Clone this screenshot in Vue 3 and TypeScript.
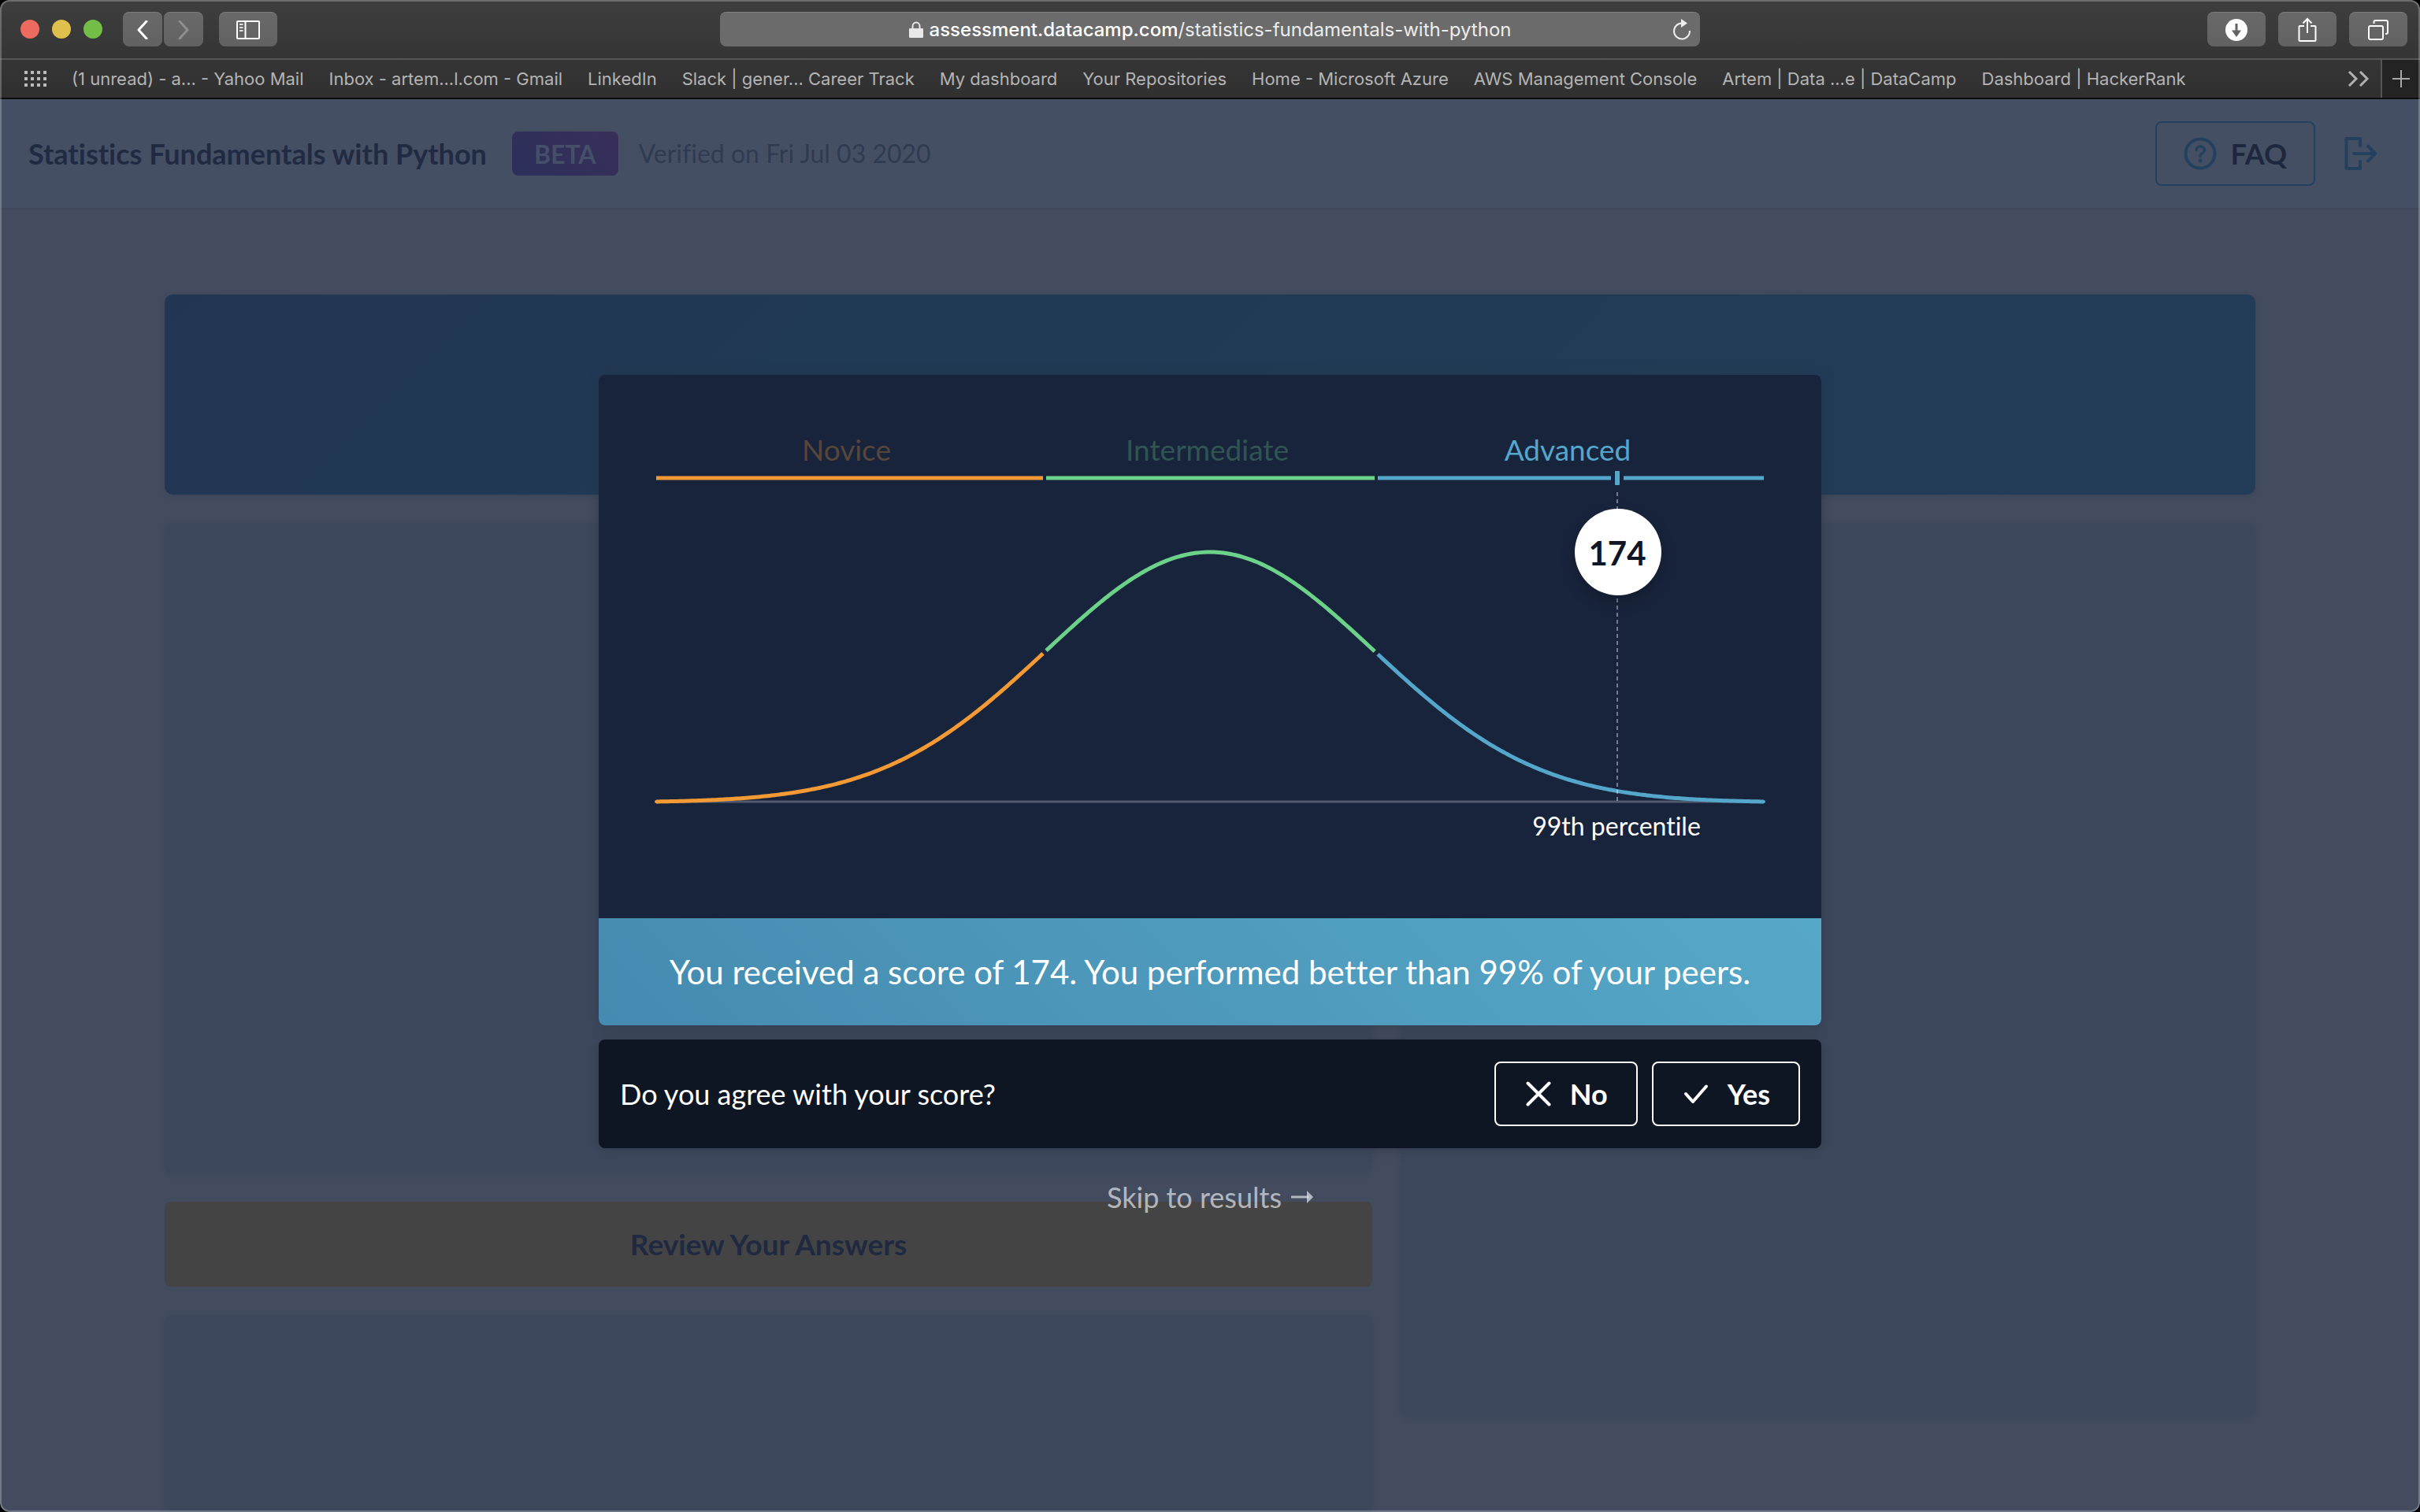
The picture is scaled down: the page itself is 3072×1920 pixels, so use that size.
<script setup lang="ts">
interface Level {
  name: string
  color: string
  from: number
  to: number
  active: boolean
}

const bookmarks: string[] = [
  '(1 unread) - a... - Yahoo Mail',
  'Inbox - artem...l.com - Gmail',
  'LinkedIn',
  'Slack | gener... Career Track',
  'My dashboard',
  'Your Repositories',
  'Home - Microsoft Azure',
  'AWS Management Console',
  'Artem | Data ...e | DataCamp',
  'Dashboard | HackerRank',
]

const levels: Level[] = [
  { name: 'Novice', color: '#f39a35', from: 73, to: 564, active: false },
  { name: 'Intermediate', color: '#6cd28a', from: 568, to: 985, active: false },
  { name: 'Advanced', color: '#54a7cb', from: 989, to: 1479, active: true },
]

const score = 174
const scoreX = 1293

const peakX = 776
const baseY = 543
const peakHeight = 318
const sigma = 208

// Samples the normal distribution between two x positions.
function bell(from: number, to: number): string {
  const points: string[] = []
  for (let x = from; x <= to; x += 3) points.push(point(x))
  points.push(point(to))
  return 'M' + points.join('L')
}

function point(x: number): string {
  const d = (x - peakX) / sigma
  return x + ' ' + (baseY - peakHeight * Math.exp(-0.5 * d * d)).toFixed(2)
}
</script>

<template>
  <div class="window">
    <header class="toolbar">
      <div class="lights">
        <span class="light red"></span>
        <span class="light yellow"></span>
        <span class="light green"></span>
      </div>
      <div class="history">
        <button class="tool narrow" aria-label="Back">
          <svg width="14" height="24" viewBox="0 0 14 24"><path d="M12 1L2 12L12 23" fill="none" stroke="#fff" stroke-width="3" stroke-linecap="round" stroke-linejoin="round" /></svg>
        </button>
        <button class="tool narrow" aria-label="Forward">
          <svg width="14" height="24" viewBox="0 0 14 24"><path d="M2 1L12 12L2 23" fill="none" stroke="#8e8e8e" stroke-width="3" stroke-linecap="round" stroke-linejoin="round" /></svg>
        </button>
      </div>
      <button class="tool" aria-label="Sidebar">
        <svg width="30" height="24" viewBox="0 0 30 24">
          <rect x="1" y="1" width="28" height="22" rx="1" fill="none" stroke="#fff" stroke-width="2" />
          <path d="M11.500 1V23" stroke="#fff" stroke-width="2" />
          <path d="M4 5H8.500M4 9H8.500M4 13H8.500" stroke="#ddd" stroke-width="2" />
        </svg>
      </button>
      <div class="address">
        <svg width="18" height="22" viewBox="0 0 18 22">
          <path d="M4.500 10V6.500a4.500 5 0 0 1 9 0V10" fill="none" stroke="#e8e8e8" stroke-width="2" />
          <rect x="0" y="9" width="18" height="12" rx="1" fill="#e8e8e8" />
        </svg>
        <span class="url"><b>assessment.datacamp.com</b>/statistics-fundamentals-with-python</span>
        <button class="reload" aria-label="Reload">
          <svg width="26" height="28" viewBox="0 0 26 28">
            <path d="M13 5.500A10 10 0 1 0 23 15" fill="none" stroke="#eee" stroke-width="2" />
            <path d="M12 0L20 5.500L12 11Z" fill="#eee" />
          </svg>
        </button>
      </div>
      <div class="actions">
        <button class="tool" aria-label="Downloads">
          <svg width="28" height="28" viewBox="0 0 28 28">
            <circle cx="14" cy="14" r="14" fill="#fff" />
            <path d="M12.500 6h3v8.500h4.500L14 23L8 14.500h4.500Z" fill="#626262" />
          </svg>
        </button>
        <button class="tool" aria-label="Share">
          <svg width="24" height="32" viewBox="0 0 24 32">
            <path d="M8 11H2.500a1 1 0 0 0-1 1v17a1 1 0 0 0 1 1h19a1 1 0 0 0 1-1V12a1 1 0 0 0-1-1H16M12 20V2M6.500 7.500L12 2L17.500 7.500" fill="none" stroke="#fff" stroke-width="2" />
          </svg>
        </button>
        <button class="tool" aria-label="Show tabs">
          <svg width="26" height="26" viewBox="0 0 26 26">
            <rect x="1" y="8" width="18" height="17" rx="2" fill="none" stroke="#fff" stroke-width="2" />
            <path d="M7.500 5V3a2 2 0 0 1 2-2H23a2 2 0 0 1 2 2v13a2 2 0 0 1-2 2h-1" fill="none" stroke="#fff" stroke-width="2" />
          </svg>
        </button>
      </div>
    </header>

    <nav class="bookmarks">
      <svg class="apps" width="28" height="20" viewBox="0 0 28 20">
        <path d="M0 2H28M0 10H28M0 18H28" stroke="#bbb" stroke-width="4" stroke-dasharray="4" />
      </svg>
      <a v-for="name in bookmarks" :key="name" href="#">{{ name }}</a>
      <svg class="more" width="28" height="20" viewBox="0 0 28 20">
        <path d="M2 1L11 10L2 19M16 1L25 10L16 19" fill="none" stroke="#b0b0b0" stroke-width="3" />
      </svg>
      <button class="new-tab" aria-label="New tab">
        <svg width="22" height="22" viewBox="0 0 22 22"><path d="M11 0V22M0 11H22" stroke="#a8a8a8" stroke-width="2" /></svg>
      </button>
    </nav>

    <div class="page">
      <header class="page-head">
        <h1>Statistics Fundamentals with Python</h1>
        <span class="beta">BETA</span>
        <span class="verified">Verified on Fri Jul 03 2020</span>
        <button class="faq">
          <svg width="42" height="42" viewBox="0 0 42 42">
            <circle cx="21" cy="21" r="18.500" fill="none" stroke="#24405f" stroke-width="4" />
            <path d="M16 16.500c0-6 10.500-6 10.500 0c0 4-5.500 4-5.500 8" fill="none" stroke="#24405f" stroke-width="3.600" stroke-linecap="round" />
            <circle cx="21" cy="30" r="2.500" fill="#24405f" />
          </svg>
          FAQ
        </button>
        <button class="logout" aria-label="Log out">
          <svg width="42" height="42" viewBox="0 0 42 42">
            <path d="M20 11V2H2.500V40H20V31" fill="none" stroke="#24405f" stroke-width="4" stroke-linecap="round" stroke-linejoin="round" />
            <path d="M12 21H38M30 11.500L39 21L30 30.500" fill="none" stroke="#24405f" stroke-width="4" stroke-linecap="round" stroke-linejoin="round" />
          </svg>
        </button>
      </header>

      <main class="content">
        <section class="banner"></section>
        <div class="columns">
          <div class="left">
            <section class="card summary"></section>
            <button class="review">Review Your Answers</button>
            <section class="card rest"></section>
          </div>
          <section class="card side"></section>
        </div>
      </main>

      <div class="overlay">
        <div class="dialog" role="dialog" aria-label="Your score">
          <div class="result">
            <svg class="chart" viewBox="0 0 1552 690">
              <g v-for="level in levels" :key="level.name">
                <text class="level" :x="(level.from + level.to) / 2 - 4" y="109" :fill="level.color" :fill-opacity="level.active ? 1 : 0.3">{{ level.name }}</text>
                <path :d="`M${level.from} 131H${level.to}`" :stroke="level.color" stroke-width="5" />
              </g>
              <rect :x="scoreX - 8" y="120" width="16" height="22" fill="#18243c" />
              <rect :x="scoreX - 3" y="122" width="6" height="18" rx="1" fill="#54a7cb" />
              <path d="M73 542H1479" stroke="#505a6e" stroke-width="3" />
              <path v-for="level in levels" :key="level.color" :d="bell(level.from, level.to)" fill="none" :stroke="level.color" stroke-width="5" />
              <circle cx="73" cy="542" r="2" fill="#f39a35" />
              <circle cx="1479" cy="542" r="2" fill="#54a7cb" />
              <path :d="`M${scoreX} 149V542`" stroke="#fff" stroke-opacity="0.4" stroke-width="2" stroke-dasharray="5 4" />
              <circle class="bubble" :cx="scoreX + 1" cy="225" r="55" fill="#fff" />
              <text class="score" :x="scoreX" y="242">{{ score }}</text>
              <text class="percentile" :x="scoreX - 1" y="585">99th percentile</text>
            </svg>
            <p class="message">You received a score of 174. You performed better than 99% of your peers.</p>
          </div>
          <div class="question">
            <p>Do you agree with your score?</p>
            <button class="answer">
              <svg width="32" height="32" viewBox="0 0 32 32"><path d="M2.500 2.500L29.500 29.500M29.500 2.500L2.500 29.500" stroke="#fff" stroke-width="4" stroke-linecap="round" /></svg>
              No
            </button>
            <button class="answer">
              <svg width="32" height="32" viewBox="0 0 32 32"><path d="M3 16L12 26L29 6.500" fill="none" stroke="#fff" stroke-width="4" stroke-linecap="round" stroke-linejoin="round" /></svg>
              Yes
            </button>
          </div>
          <a class="skip" href="#">
            Skip to results
            <svg width="28" height="16" viewBox="0 0 28 16"><path d="M0 8H22" stroke="currentColor" stroke-width="3" /><path d="M20 0L28 8L20 16Z" fill="currentColor" /></svg>
          </a>
        </div>
      </div>
    </div>
  </div>
</template>

<style>
body {
  background: #000;
}
</style>

<style scoped>
* {
  box-sizing: border-box;
}

button {
  padding: 0;
  border: 0;
  background: none;
  font: inherit;
  color: inherit;
}

h1,
p {
  margin: 0;
}

a {
  color: inherit;
  text-decoration: none;
}

svg {
  display: block;
  flex: none;
}

.window {
  position: relative;
  display: flex;
  flex-direction: column;
  height: 100vh;
  overflow: hidden;
  border-radius: 12px;
  background: #434c5f;
  font-family: Lato, sans-serif;
  font-size: 36px;
  font-variant-ligatures: none;
  line-height: 54px;
}

.window::after {
  content: '';
  position: absolute;
  inset: 0;
  border: 2px solid rgba(255, 255, 255, 0.25);
  border-radius: 12px;
  pointer-events: none;
}

.toolbar {
  display: flex;
  align-items: center;
  flex: none;
  height: 76px;
  padding: 0 16px 0 26px;
  border-bottom: 2px solid #555;
  background: linear-gradient(#3e3e3e, #353535);
}

.lights {
  display: flex;
  gap: 16px;
  margin-right: 26px;
}

.light {
  width: 24px;
  height: 24px;
  border-radius: 50%;
}

.red {
  background: #ed6a5e;
}

.yellow {
  background: #e0c04c;
}

.green {
  background: #72be47;
}

.history {
  display: flex;
  gap: 2px;
  margin-right: 20px;
}

.tool {
  display: flex;
  align-items: center;
  justify-content: center;
  width: 74px;
  height: 44px;
  border-top: 1px solid #7c7c7c;
  border-radius: 8px;
  background: linear-gradient(#696969, #626262);
}

.narrow {
  width: 50px;
}

.address {
  display: flex;
  align-items: center;
  justify-content: center;
  gap: 8px;
  width: 1244px;
  height: 44px;
  margin: 0 auto 0 562px;
  padding-left: 44px;
  border-top: 1px solid #828282;
  border-radius: 8px;
  background: #6b6b6b;
  font: 24px/30px Inter, sans-serif;
  color: #ececec;
}

.address > svg {
  margin-left: auto;
}

.url {
  padding-top: 1px;
}

.url b {
  font-weight: 500;
  color: #fff;
}

.reload {
  margin: 0 10px 0 auto;
}

.actions {
  display: flex;
  gap: 16px;
}

.bookmarks {
  display: flex;
  align-items: center;
  flex: none;
  gap: 32px;
  height: 50px;
  padding-left: 31px;
  border-bottom: 2px solid #0c0c0c;
  background: linear-gradient(#353535, #303030);
  font: 22px/28px Inter, sans-serif;
  color: #b4b4b4;
  white-space: nowrap;
}

.more {
  margin-left: auto;
}

.new-tab {
  display: flex;
  align-items: center;
  justify-content: center;
  width: 50px;
  height: 48px;
  margin-left: -18px;
  border-left: 2px solid #555;
  background: #232323;
}

.page {
  position: relative;
  display: flex;
  flex-direction: column;
  flex: 1;
  min-height: 0;
}

.page-head {
  display: flex;
  align-items: center;
  flex: none;
  height: 140px;
  padding: 0 54px 0 36px;
  border-bottom: 2px solid #404a5e;
  background: #454f63;
}

h1 {
  font-size: 36px;
  color: #202b43;
}

.beta {
  height: 56px;
  margin: 0 26px 0 32px;
  padding: 0 28px;
  border-radius: 8px;
  background: linear-gradient(45deg, #2b305b, #392f58);
  font-weight: 700;
  font-size: 32px;
  line-height: 58px;
  color: #454f68;
}

.verified {
  font-size: 32px;
  color: #2e3b52;
}

.faq {
  display: flex;
  align-items: center;
  gap: 17px;
  height: 82px;
  margin: 0 37px 0 auto;
  padding: 0 34px;
  border: 2px solid #24405f;
  border-radius: 8px;
  font-weight: 700;
  color: #1e2740;
}

.content {
  display: flex;
  flex-direction: column;
  flex: 1;
  gap: 36px;
  min-height: 0;
  padding: 108px 209px 0;
}

.banner {
  flex: none;
  height: 254px;
  border-radius: 10px;
  background: linear-gradient(135deg, #213653, #203a55 40%, #233d59);
  box-shadow: 0 2px 6px rgba(20, 30, 50, 0.15);
}

.columns {
  display: flex;
  align-items: flex-start;
  flex: 1;
  gap: 36px;
  min-height: 0;
}

.left {
  display: flex;
  flex-direction: column;
  flex: 1533;
  gap: 36px;
  height: 100%;
}

.card {
  border-radius: 10px;
  background: #3d485d;
  box-shadow: 0 1px 6px rgba(40, 60, 80, 0.25);
}

.summary {
  flex: none;
  height: 826px;
}

.rest {
  flex: 1;
  border-radius: 10px 10px 0 0;
}

.side {
  flex: 1085;
  height: 1136px;
}

.review {
  flex: none;
  height: 108px;
  border-radius: 8px;
  background: #444;
  font-weight: 700;
  font-size: 37px;
  color: #1f2942;
}

.overlay {
  position: absolute;
  inset: 0;
  display: flex;
  align-items: center;
  justify-content: center;
  color: #fff;
}

.dialog {
  width: 1552px;
  max-width: 100%;
}

.result {
  overflow: hidden;
  margin-bottom: 18px;
  border-radius: 8px;
  background: #18243c;
  box-shadow: 0 2px 14px rgba(40, 50, 60, 0.5);
}

.chart {
  width: 100%;
}

.level,
.score,
.percentile {
  text-anchor: middle;
}

.level {
  font-size: 37px;
}

.score {
  font-weight: 700;
  font-size: 42px;
  fill: #0f1625;
}

.bubble {
  filter: drop-shadow(0 8px 8px rgba(5, 10, 20, 0.3));
}

.percentile {
  font-size: 32px;
  fill: #fff;
}

.message {
  padding: 41px 32px;
  background: linear-gradient(45deg, #458ab0, #4c97ba 40%, #56a8c8);
  font-size: 42px;
  text-align: center;
}

.question {
  display: flex;
  align-items: center;
  gap: 18px;
  height: 138px;
  padding: 0 27px;
  border-radius: 8px;
  background: #0e1523;
  box-shadow: 0 2px 14px rgba(40, 50, 60, 0.5);
}

.question p {
  margin-right: auto;
}

.answer {
  display: flex;
  align-items: center;
  gap: 24px;
  height: 82px;
  padding: 0 36px 0 38px;
  border: 2px solid #fff;
  border-radius: 8px;
  font-weight: 700;
}

.skip {
  display: flex;
  align-items: center;
  justify-content: center;
  gap: 12px;
  padding: 35px 0 23px;
  color: rgba(255, 255, 255, 0.6);
}
</style>
